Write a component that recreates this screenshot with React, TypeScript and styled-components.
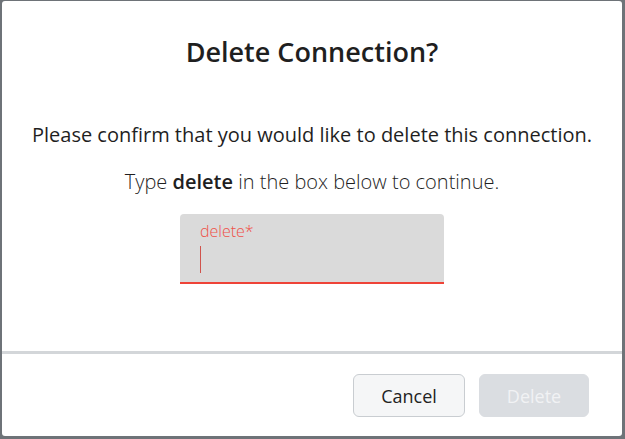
import styled, { createGlobalStyle } from "styled-components";

const GlobalStyle = createGlobalStyle`
  html, body {
    margin: 0;
    padding: 0;
    background: #6e7378;
  }
  body {
    font-family: "Open Sans", "Liberation Sans", sans-serif;
    color: #222;
  }
  * { box-sizing: border-box; }
`;

const Backdrop = styled.div`
  width: 625px;
  height: 439px;
  padding: 1px 3px 3px 2px;
`;

const Dialog = styled.div`
  width: 620px;
  height: 435px;
  background: #fff;
  border-radius: 3px;
  display: flex;
  flex-direction: column;
`;

const Body = styled.div`
  flex: 1;
  display: flex;
  flex-direction: column;
  align-items: center;
  padding-top: 33px;
`;

const Title = styled.h2`
  margin: 0;
  font-size: 27px;
  line-height: 36px;
  font-weight: 600;
  color: #1f1f1f;
`;

const Text = styled.p<{ $light?: boolean; $top: number }>`
  margin: ${(p) => p.$top}px 0 0;
  font-size: 20px;
  line-height: 26px;
  font-weight: ${(p) => (p.$light ? 300 : 400)};
  color: #1f1f1f;
  white-space: nowrap;

  b {
    font-weight: 600;
  }
`;

const Field = styled.div`
  margin-top: 19px;
  width: 264px;
  height: 70px;
  background: #dadada;
  border-radius: 4px 4px 0 0;
  border-bottom: 2px solid #ee4337;
  padding: 7px 20px 0;
  display: flex;
  flex-direction: column;
`;

const Label = styled.span`
  font-size: 16px;
  line-height: 20px;
  font-weight: 300;
  color: #ef5148;
`;

const Caret = styled.span`
  margin-top: 5px;
  width: 1px;
  height: 27px;
  background: #d0534c;
`;

const Divider = styled.div`
  height: 3px;
  background: #d3d6d9;
`;

const Footer = styled.div`
  display: flex;
  justify-content: flex-end;
  gap: 14px;
  padding: 20px 33px 19px;
`;

const Button = styled.button<{ $primary?: boolean }>`
  width: ${(p) => (p.$primary ? 110 : 112)}px;
  height: 43px;
  border-radius: 6px;
  font-family: "Open Sans", "Liberation Sans", sans-serif;
  font-size: 18px;
  font-weight: 400;
  cursor: pointer;
  border: 1px solid ${(p) => (p.$primary ? "#dadde1" : "#c9cdd1")};
  background: ${(p) => (p.$primary ? "#dadde1" : "#f5f6f7")};
  color: ${(p) => (p.$primary ? "#f1f2f4" : "#222")};
`;

export default function App() {
  return (
    <>
      <GlobalStyle />
      <Backdrop>
        <Dialog>
          <Body>
            <Title>Delete Connection?</Title>
            <Text $top={52}>
              Please confirm that you would like to delete this connection.
            </Text>
            <Text $top={21} $light>
              Type <b>delete</b> in the box below to continue.
            </Text>
            <Field>
              <Label>delete*</Label>
              <Caret />
            </Field>
          </Body>
          <Divider />
          <Footer>
            <Button>Cancel</Button>
            <Button $primary disabled>
              Delete
            </Button>
          </Footer>
        </Dialog>
      </Backdrop>
    </>
  );
}
